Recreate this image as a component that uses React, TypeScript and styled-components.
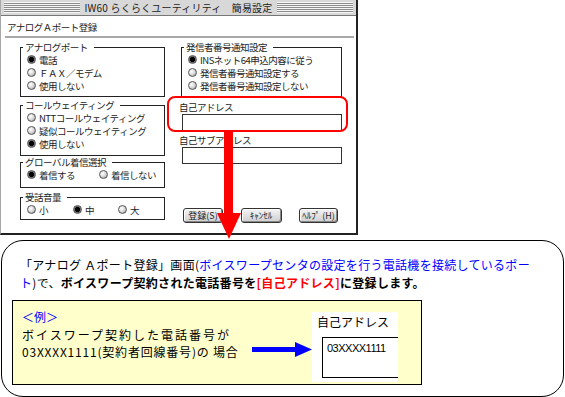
import * as React from 'react';
import styled, { createGlobalStyle } from 'styled-components';

const GlobalStyle = createGlobalStyle`
	html, body {
		margin: 0;
		padding: 0;
		background: #fff;
	}
	body {
		font-family: "Noto Sans CJK JP", "Noto Sans", sans-serif;
		color: #000;
	}
`;

const Page = styled.div`
	position: relative;
	width: 565px;
	height: 397px;
	overflow: hidden;
`;

/* ---- dialog window ---- */

const Window = styled.div`
	width: 358px;
	height: 235px;
	box-sizing: border-box;
	background: #fff;
	border-left: 1px solid #a8a8a8;
	border-right: 2px solid #222;
	border-bottom: 2px solid #222;
	display: flex;
	flex-direction: column;
`;

const TitleBar = styled.div`
	height: 16px;
	box-sizing: border-box;
	background: #d8d8d8;
	border-bottom: 1px solid #777;
	display: flex;
	align-items: center;
	gap: 4px;
	padding: 0 3px;
`;

const Stripes = styled.div`
	flex: 1;
	height: 11px;
	background: repeating-linear-gradient(to bottom, #f6f6f6 0 1px, #8c8c8c 1px 2px);
`;

const Title = styled.div`
	font-size: 10px;
	letter-spacing: 0.2px;
	line-height: 14px;
	color: #222;
	white-space: nowrap;
`;

const Header = styled.div`
	margin: 0 2px 0 4px;
	padding: 4px 0 2px 2px;
	font-size: 9.5px;
	letter-spacing: -0.5px;
	line-height: 14px;
	color: #222;
	border-bottom: 2px solid #a8a8a8;
`;

const Body = styled.div`
	flex: 1;
	display: flex;
	gap: 16px;
	padding: 3px 0 10px 19px;
`;

const Column = styled.div<{ $w: number }>`
	width: ${(p) => p.$w}px;
	display: flex;
	flex-direction: column;
`;

const Group = styled.fieldset<{ $h: number; $mt?: number }>`
	margin: ${(p) => p.$mt ?? 0}px 0 0 0;
	padding: 0 4px 3px 6px;
	height: ${(p) => p.$h}px;
	box-sizing: border-box;
	min-width: 0;
	border: 1px solid #222;
	display: flex;
	flex-direction: column;
	justify-content: flex-end;
`;

const Legend = styled.legend`
	margin-left: -4px;
	padding: 0 6px 0 2px;
	font-size: 9.5px;
	letter-spacing: -0.5px;
	line-height: 12px;
	color: #222;
`;

const OptionRow = styled.div`
	display: flex;
`;

const Option = styled.div<{ $w?: number }>`
	display: flex;
	align-items: center;
	gap: 3px;
	height: 13px;
	width: ${(p) => (p.$w ? `${p.$w}px` : 'auto')};
	font-size: 9.5px;
	letter-spacing: -0.5px;
	color: #222;
	white-space: nowrap;
`;

const Radio = styled.span<{ $on?: boolean }>`
	flex-shrink: 0;
	width: 9px;
	height: 9px;
	box-sizing: border-box;
	border-radius: 50%;
	border: 1px solid #555;
	background: ${(p) =>
		p.$on
			? 'radial-gradient(circle, #000 0 2.3px, #666 2.8px, #aaa 100%)'
			: 'radial-gradient(circle at 35% 35%, #fff 0, #ddd 45%, #8f8f8f 100%)'};
`;

const FieldLabel = styled.div<{ $mt: number }>`
	margin: ${(p) => p.$mt}px 0 0 -2px;
	font-size: 9.5px;
	letter-spacing: -0.5px;
	line-height: 12px;
	color: #222;
`;

const TextBox = styled.div`
	margin: 1px 0 0 1px;
	height: 17px;
	box-sizing: border-box;
	border: 1px solid #333;
	background: #fff;
`;

const ButtonRow = styled.div`
	margin-top: auto;
	display: flex;
	justify-content: space-between;
	padding: 0 4px 0 2px;
`;

const Button = styled.div<{ $w: number }>`
	width: ${(p) => p.$w}px;
	height: 15px;
	box-sizing: border-box;
	border: 1px solid #333;
	border-radius: 3px;
	background: linear-gradient(#f4f4f4, #cfcfcf);
	box-shadow: inset -1px -1px 0 #888, inset 1px 1px 0 #fff;
	font-size: 9px;
	line-height: 13px;
	text-align: center;
	color: #222;
	white-space: nowrap;
`;

/* ---- annotations over the dialog ---- */

const Highlight = styled.div`
	position: absolute;
	left: 167px;
	top: 96px;
	width: 181px;
	height: 36px;
	box-sizing: border-box;
	border: 2px solid #ff0000;
	border-radius: 8px;
`;

const DownArrow = styled.svg`
	position: absolute;
	left: 217px;
	top: 131px;
`;

/* ---- explanation callout ---- */

const Callout = styled.div`
	margin: 5px 0 0 1px;
	width: 563px;
	height: 157px;
	box-sizing: border-box;
	border: 1px solid #000;
	border-radius: 22px;
	padding: 15px 0 0 10px;
`;

const Message = styled.p`
	margin: 0;
	padding-left: 8px;
	font-size: 12px;
	line-height: 18px;
	letter-spacing: 0.3px;
	white-space: nowrap;
`;

const Blue = styled.span`
	color: #0000ff;
`;

const Strong = styled.strong`
	font-weight: 700;
`;

const Red = styled.span`
	color: #ff0000;
`;

const Example = styled.div`
	margin-top: 8px;
	width: 410px;
	height: 85px;
	box-sizing: border-box;
	border: 1px solid #000;
	background: #ffffcc;
	display: flex;
	align-items: flex-start;
	padding-left: 9px;
`;

const ExampleText = styled.div`
	width: 230px;
	padding-top: 7px;
	font-size: 12px;
	line-height: 17.5px;
	white-space: nowrap;
`;

const ExampleLine = styled.div<{ $ls?: number }>`
	letter-spacing: ${(p) => p.$ls ?? 0}px;
`;

const ExampleTag = styled.div`
	color: #0000ff;
	letter-spacing: 0;
`;

const RightArrow = styled.svg`
	margin-top: 40px;
	flex-shrink: 0;
`;

const Inset = styled.div`
	margin-top: 11px;
	width: 86px;
	height: 70px;
	box-sizing: border-box;
	background: #fff;
	padding: 2px 0 4px 5px;
	display: flex;
	flex-direction: column;
`;

const InsetLabel = styled.div`
	font-size: 12px;
	line-height: 16px;
`;

const InsetBox = styled.div`
	margin: 7px 0 0 5px;
	flex: 1;
	border: 1px solid #000;
	border-right: none;
	padding: 3px 0 0 4px;
	font-family: "Liberation Sans", Arial, sans-serif;
	font-size: 11px;
	letter-spacing: -0.5px;
	line-height: 14px;
`;

const App: React.FC = () => {
	return (
		<Page>
			<GlobalStyle />
			<Window>
				<TitleBar>
					<Stripes />
					<Title>IW60 らくらくユーティリティ　簡易設定</Title>
					<Stripes />
				</TitleBar>
				<Header>アナログＡポート登録</Header>
				<Body>
					<Column $w={145}>
						<Group $h={56}>
							<Legend>アナログポート</Legend>
							<Option>
								<Radio $on />
								電話
							</Option>
							<Option>
								<Radio />
								ＦＡＸ／モデム
							</Option>
							<Option>
								<Radio />
								使用しない
							</Option>
						</Group>
						<Group $h={57} $mt={2}>
							<Legend>コールウェイティング</Legend>
							<Option>
								<Radio />
								NTTコールウェイティング
							</Option>
							<Option>
								<Radio />
								疑似コールウェイティング
							</Option>
							<Option>
								<Radio $on />
								使用しない
							</Option>
						</Group>
						<Group $h={32}>
							<Legend>グローバル着信選択</Legend>
							<OptionRow>
								<Option $w={72}>
									<Radio $on />
									着信する
								</Option>
								<Option>
									<Radio />
									着信しない
								</Option>
							</OptionRow>
						</Group>
						<Group $h={29} $mt={3}>
							<Legend>受話音量</Legend>
							<OptionRow>
								<Option $w={46}>
									<Radio />
									小
								</Option>
								<Option $w={45}>
									<Radio $on />
									中
								</Option>
								<Option>
									<Radio />
									大
								</Option>
							</OptionRow>
						</Group>
					</Column>
					<Column $w={161}>
						<Group $h={56}>
							<Legend>発信者番号通知設定</Legend>
							<Option>
								<Radio $on />
								INSネット64申込内容に従う
							</Option>
							<Option>
								<Radio />
								発信者番号通知設定する
							</Option>
							<Option>
								<Radio />
								発信者番号通知設定しない
							</Option>
						</Group>
						<FieldLabel $mt={4}>自己アドレス</FieldLabel>
						<TextBox />
						<FieldLabel $mt={3}>自己サブアドレス</FieldLabel>
						<TextBox />
						<ButtonRow>
							<Button $w={40}>登録(S)</Button>
							<Button $w={41}>ｷｬﾝｾﾙ</Button>
							<Button $w={39}>ﾍﾙﾌﾟ (H)</Button>
						</ButtonRow>
					</Column>
				</Body>
			</Window>

			<Callout>
				<Message>
					「アナログ Ａポート登録」画面(
					<Blue>
						ボイスワープセンタの設定を行う電話機を接続しているポー
						<br />ト
					</Blue>
					)で、
					<Strong>
						ボイスワープ契約された電話番号を<Red>[自己アドレス]</Red>
						に登録します。
					</Strong>
				</Message>
				<Example>
					<ExampleText>
						<ExampleTag>＜例＞</ExampleTag>
						<ExampleLine $ls={2}>ボイスワープ契約した電話番号が</ExampleLine>
						<ExampleLine $ls={0.8}>03XXXX1111(契約者回線番号)の 場合</ExampleLine>
					</ExampleText>
					<RightArrow width="60" height="17" viewBox="0 0 60 17">
						<rect x="0" y="6" width="44" height="5" fill="#0000ff" />
						<polygon points="43,1 60,8.5 43,16" fill="#0000ff" />
					</RightArrow>
					<Inset>
						<InsetLabel>自己アドレス</InsetLabel>
						<InsetBox>03XXXX1111</InsetBox>
					</Inset>
				</Example>
			</Callout>

			<Highlight />
			<DownArrow width="25" height="109" viewBox="0 0 25 109">
				<rect x="7" y="0" width="9" height="83" fill="#ff0000" />
				<polygon points="0,82 24,82 12,108" fill="#ff0000" />
			</DownArrow>
		</Page>
	);
};

export default App;
